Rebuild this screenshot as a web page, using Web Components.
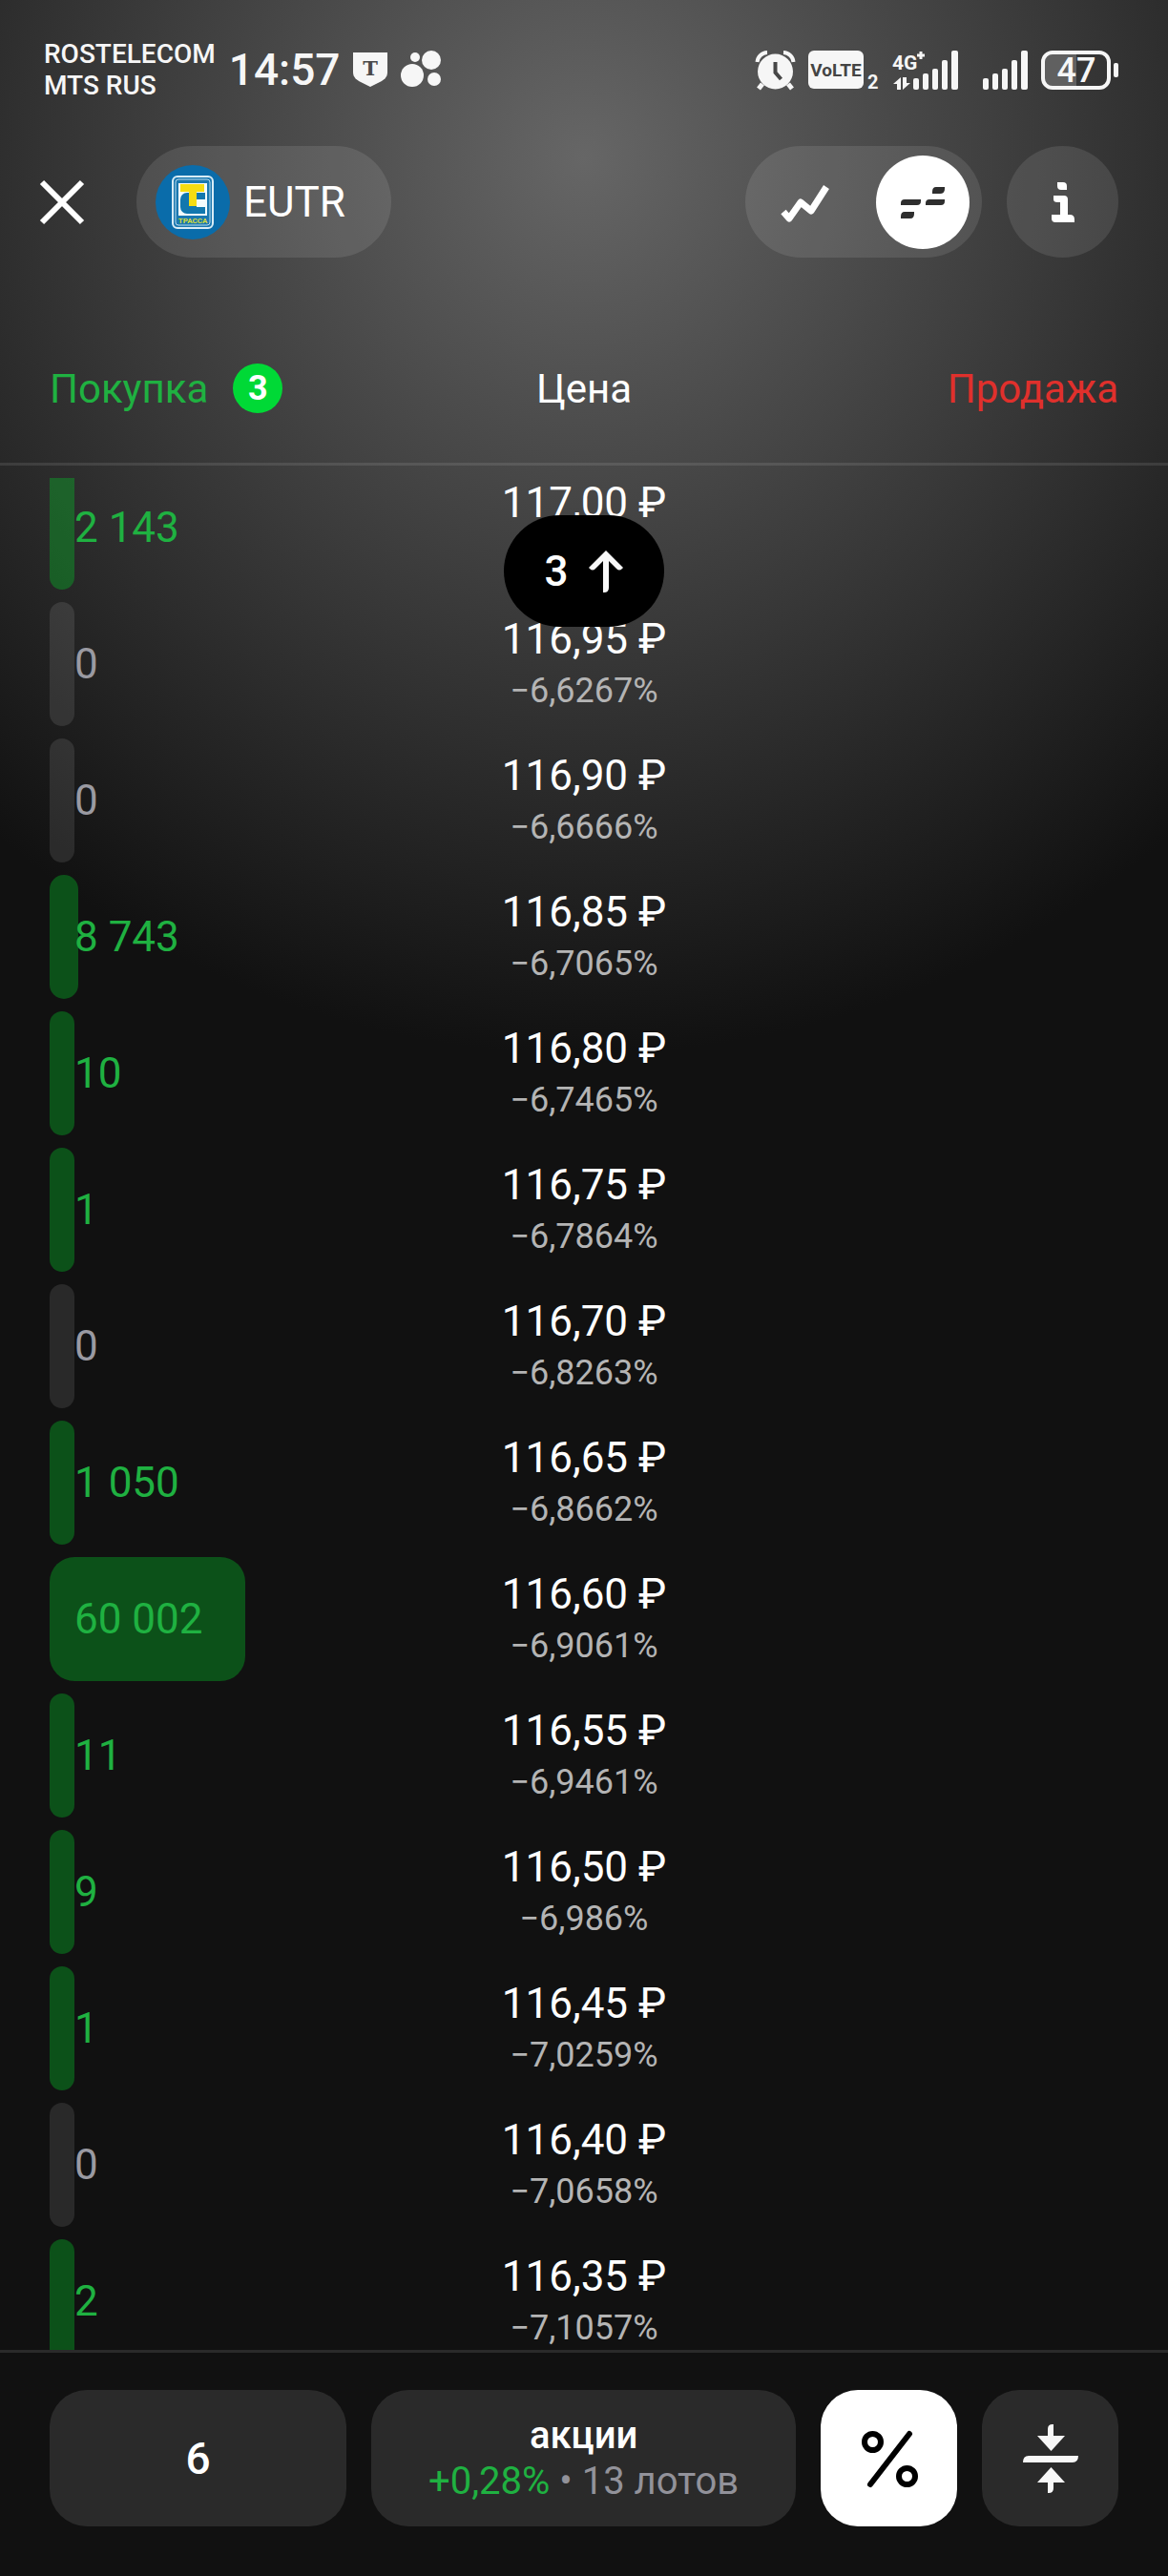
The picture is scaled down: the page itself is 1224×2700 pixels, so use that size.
<!DOCTYPE html>
<html lang="ru">
<head>
<meta charset="utf-8">
<meta name="viewport" content="width=device-width, initial-scale=1">
<title>EUTR</title>
<style>
    body {
        margin: 0;
        background: #111;
        color: #fff;
        font-family: Roboto, "Noto Sans", sans-serif;
    }
</style>
</head>
<body>
<app-screen>
    <status-bar slot="status"></status-bar>
    <top-bar slot="top" ticker="EUTR"></top-bar>
    <order-book bids="3"></order-book>
    <bottom-bar slot="bottom"></bottom-bar>
</app-screen>

<script>
class AppScreen extends HTMLElement {
    constructor() {
        super();
        this.attachShadow({ mode: 'open' });
        this.shadowRoot.innerHTML = `
            <style>
                :host {
                    display: flex;
                    flex-direction: column;
                    height: 100vh;
                    background: radial-gradient(circle 940px at 50% 165px, #666, #111);
                }

                main {
                    display: flex;
                    flex: 1;
                    min-height: 0;
                }

                ::slotted(order-book) {
                    flex: 1;
                }
            </style>
            <slot name="status"></slot>
            <slot name="top"></slot>
            <main><slot></slot></main>
            <slot name="bottom"></slot>
        `;
    }
}

class StatusBar extends HTMLElement {
    constructor() {
        super();
        this.attachShadow({ mode: 'open' });
        this.shadowRoot.innerHTML = `
            <style>
                :host {
                    display: flex;
                    align-items: center;
                    justify-content: space-between;
                    height: 66px;
                    padding: 40px 52px 47px 46px;
                    color: #f6f6f6;
                }

                .group {
                    display: flex;
                    align-items: center;
                    gap: 14px;
                }

                .signals {
                    display: flex;
                    gap: 26px;
                }

                .carrier {
                    font-size: 28px;
                    line-height: 33px;
                    font-weight: 500;
                }

                .time {
                    font-size: 46px;
                    line-height: 66px;
                    font-weight: 500;
                }

                svg {
                    display: block;
                    overflow: visible;
                    fill: currentColor;
                }
            </style>
            <div class="group">
                <div class="carrier">ROSTELECOM<br>MTS RUS</div>
                <div class="time">14:57</div>
                <svg width="36" height="36" viewBox="0 0 36 36">
                    <path d="M0 0h36v21c0 5-4 8-8 10l-10 5-10-5c-4-2-8-5-8-10z"/>
                    <text x="18" y="24" text-anchor="middle" font-family="DejaVu Serif, serif" font-size="21" font-weight="700" fill="#4a4a4a">T</text>
                </svg>
                <svg width="42" height="40" viewBox="0 0 42 40">
                    <circle cx="15" cy="7" r="5"/>
                    <circle cx="32" cy="10" r="10"/>
                    <circle cx="12" cy="26" r="12"/>
                    <circle cx="35" cy="30" r="7"/>
                </svg>
            </div>
            <div class="group">
                <svg width="41" height="42" viewBox="0 0 41 42">
                    <circle cx="20.500" cy="23" r="18.500"/>
                    <path d="M1.500 13A11 11 0 0 1 12 3M39.500 13A11 11 0 0 0 29 3" fill="none" stroke="currentColor" stroke-width="4"/>
                    <path d="M7 36l-4 5M34 36l4 5" stroke="currentColor" stroke-width="5"/>
                    <path d="M20.500 13v11l6 7" fill="none" stroke="#474747" stroke-width="4"/>
                </svg>
                <svg width="74" height="41" viewBox="0 0 74 41">
                    <rect width="58" height="40" rx="6"/>
                    <text x="29" y="27" text-anchor="middle" font-size="19" font-weight="700" fill="#444">VoLTE</text>
                    <text x="62" y="40" font-size="20" font-weight="700">2</text>
                </svg>
                <div class="signals">
                    <svg width="69" height="41" viewBox="0 0 69 41">
                        <text x="0" y="20" font-size="21" font-weight="700">4G</text>
                        <path d="M26 5h8M30 1v8" stroke="currentColor" stroke-width="3"/>
                        <path d="M9 28v13H5v-6H1zM11 28h4v6h4l-8 7z"/>
                        <rect x="22" y="29" width="6" height="12" rx="2"/>
                        <rect x="32" y="24" width="6" height="17" rx="2"/>
                        <rect x="42" y="19" width="6" height="22" rx="2"/>
                        <rect x="52" y="10" width="6" height="31" rx="2"/>
                        <rect x="62" y="0" width="7" height="41" rx="2"/>
                    </svg>
                    <svg width="47" height="41" viewBox="0 0 47 41">
                        <rect x="0" y="29" width="6" height="12" rx="2"/>
                        <rect x="10" y="24" width="6" height="17" rx="2"/>
                        <rect x="20" y="19" width="6" height="22" rx="2"/>
                        <rect x="30" y="10" width="6" height="31" rx="2"/>
                        <rect x="40" y="0" width="7" height="41" rx="2"/>
                    </svg>
                </div>
                <svg width="81" height="41" viewBox="0 0 81 41">
                    <path d="M12 4h25v33H12a8 8 0 0 1-8-8V12a8 8 0 0 1 8-8z" fill="#606060"/>
                    <rect x="2" y="2" width="69" height="37" rx="10" fill="none" stroke="currentColor" stroke-width="4"/>
                    <rect x="76" y="13" width="5" height="15" rx="2"/>
                    <text x="37" y="33" text-anchor="middle" font-size="36" font-weight="500">47</text>
                </svg>
            </div>
        `;
    }
}

class TopBar extends HTMLElement {
    constructor() {
        super();
        this.attachShadow({ mode: 'open' });
    }

    connectedCallback() {
        this.shadowRoot.innerHTML = `
            <style>
                :host {
                    display: flex;
                    align-items: center;
                    gap: 26px;
                    padding: 0 52px 0 39px;
                }

                button {
                    display: flex;
                    align-items: center;
                    justify-content: center;
                    padding: 0;
                    border: 0;
                    border-radius: 60px;
                    background: none;
                    color: inherit;
                    font: inherit;
                }

                svg {
                    display: block;
                }

                .close {
                    width: 52px;
                    height: 52px;
                    margin-right: 26px;
                }

                .ticker, .modes, .info {
                    height: 117px;
                    background: rgba(255, 255, 255, 0.1);
                }

                .ticker {
                    gap: 14px;
                    padding: 0 48px 0 20px;
                    font-size: 44px;
                }

                .modes {
                    display: flex;
                    align-items: center;
                    gap: 26px;
                    margin-left: auto;
                    padding: 0 13px;
                    border-radius: 60px;
                }

                .modes button {
                    width: 98px;
                    height: 98px;
                }

                .modes button[aria-pressed="true"] {
                    background: #fff;
                    color: #2e2e2e;
                }

                .info {
                    width: 117px;
                }
            </style>
            <button class="close" aria-label="Закрыть">
                <svg width="48" height="48" viewBox="0 0 48 48"><path d="M3 3l42 42M45 3L3 45" stroke="currentColor" stroke-width="6"/></svg>
            </button>
            <button class="ticker">
                <svg width="78" height="78" viewBox="0 0 78 78">
                    <circle cx="39" cy="39" r="39" fill="#0a6caa"/>
                    <rect x="18" y="12" width="42" height="54" rx="5" fill="#1b78b0" stroke="#d9ecf6" stroke-width="2"/>
                    <rect x="21" y="15" width="36" height="48" rx="3" fill="none" stroke="#b9dcee" stroke-width="1"/>
                    <rect x="24" y="19" width="30" height="34" fill="#f2fafc"/>
                    <path d="M33 29h19v7h-9v8h9v7H33a7 7 0 0 1-7-7v-8a7 7 0 0 1 7-7z" fill="#1277ae"/>
                    <path d="M26 20h25v8h-8v15h-8V28h-9z" fill="#f5dc12"/>
                    <text x="39" y="61" text-anchor="middle" font-size="8" font-weight="700" fill="#d4dc3c">ТРАССА</text>
                </svg>
                <span>${this.getAttribute('ticker')}</span>
            </button>
            <div class="modes">
                <button aria-label="График" aria-pressed="false">
                    <svg width="54" height="48" viewBox="0 0 54 48"><path d="M5 34l6 7 12-17 11 9L50 8" fill="none" stroke="currentColor" stroke-width="7" stroke-linejoin="round"/></svg>
                </button>
                <button aria-label="Стакан" aria-pressed="true">
                    <svg width="48" height="48" viewBox="0 0 48 48" fill="currentColor">
                        <path d="M38 8h9v2q0 5-5 5h-8v-2q0-5 4-5zM5 21h17v2q0 4-4 4H1v-2q0-4 4-4zM31 21h16v2q0 4-4 4H27v-2q0-4 4-4zM5 34h10v2q0 5-4 5H1v-2q0-5 4-5z"/>
                    </svg>
                </button>
            </div>
            <button class="info" aria-label="Информация">
                <svg width="26" height="44" viewBox="0 0 26 44" fill="currentColor">
                    <path d="M7 1h6q4 0 4 4v4h-6q-4 0-4-4zM7 15h7q4 0 4 4v16h2q5 0 5 5v3H5q-4 0-4-4v-4h9V22H7q-4 0-4-3v-4z"/>
                </svg>
            </button>
        `;
    }
}

// Quantity at which a depth bar fills its whole column
const FULL_DEPTH = 109700;

const LEVELS = [
    [2143, '117,00', '−6,5868%'],
    [0, '116,95', '−6,6267%'],
    [0, '116,90', '−6,6666%'],
    [8743, '116,85', '−6,7065%'],
    [10, '116,80', '−6,7465%'],
    [1, '116,75', '−6,7864%'],
    [0, '116,70', '−6,8263%'],
    [1050, '116,65', '−6,8662%'],
    [60002, '116,60', '−6,9061%'],
    [11, '116,55', '−6,9461%'],
    [9, '116,50', '−6,986%'],
    [1, '116,45', '−7,0259%'],
    [0, '116,40', '−7,0658%'],
    [2, '116,35', '−7,1057%']
];

class OrderBook extends HTMLElement {
    constructor() {
        super();
        this.attachShadow({ mode: 'open' });
    }

    connectedCallback() {
        this.render();
        // the list opens part-way into its first level
        this.shadowRoot.querySelector('tbody').scrollTop = 13;
    }

    formatQuantity(quantity) {
        return String(quantity).replace(/\B(?=(\d{3})+$)/g, ' ');
    }

    renderLevel([quantity, price, change]) {
        return `
            <tr>
                <td class="depth ${quantity ? '' : 'empty'}">
                    <div class="bar" style="width: ${Math.round(quantity / FULL_DEPTH * 100)}%"></div>
                    <span>${this.formatQuantity(quantity)}</span>
                </td>
                <td class="level">
                    <div class="price">${price} ₽</div>
                    <div class="change">${change}</div>
                </td>
                <td></td>
            </tr>
        `;
    }

    render() {
        const bids = this.getAttribute('bids');

        this.shadowRoot.innerHTML = `
            <style>
                :host {
                    display: flex;
                    position: relative;
                    padding-top: 59px;
                }

                table {
                    display: flex;
                    flex: 1;
                    flex-direction: column;
                    gap: 13px;
                }

                thead {
                    display: block;
                    border-bottom: 3px solid rgba(255, 255, 255, 0.1);
                }

                tbody {
                    display: block;
                    flex: 1;
                    min-height: 0;
                    overflow-y: auto;
                    scrollbar-width: none;
                }

                tr {
                    display: grid;
                    grid-template-columns: 1fr 1fr 1fr;
                    align-items: center;
                    padding: 0 52px;
                }

                thead tr {
                    height: 156px;
                    font-size: 42px;
                }

                tbody tr {
                    height: 130px;
                    margin-bottom: 13px;
                }

                th {
                    padding: 0;
                    font-weight: 400;
                }

                td {
                    padding: 0;
                }

                .buy {
                    display: flex;
                    align-items: center;
                    gap: 26px;
                    color: #1fb141;
                }

                .sell {
                    color: #e0302c;
                    text-align: right;
                }

                .badge {
                    width: 52px;
                    border-radius: 26px;
                    background: #00d936;
                    color: #fff;
                    font-size: 36px;
                    line-height: 52px;
                    font-weight: 700;
                    text-align: center;
                }

                .depth {
                    display: grid;
                    align-items: center;
                    height: 130px;
                    color: #1fb141;
                    font-size: 44px;
                }

                .depth > * {
                    grid-area: 1 / 1;
                }

                .depth span {
                    padding-left: 26px;
                }

                .bar {
                    min-width: 26px;
                    height: 130px;
                    border-radius: 26px;
                    background: rgba(3, 200, 40, 0.35);
                }

                .empty {
                    color: #9a9aa2;
                }

                .empty .bar {
                    background: rgba(255, 255, 255, 0.1);
                }

                .level {
                    text-align: center;
                }

                .price {
                    font-size: 44px;
                    line-height: 56px;
                }

                .change {
                    color: #b4b4b4;
                    font-size: 36px;
                    line-height: 52px;
                }

                .jump {
                    position: absolute;
                    top: 270px;
                    left: 50%;
                    transform: translateX(-50%);
                    display: flex;
                    align-items: center;
                    justify-content: center;
                    gap: 20px;
                    width: 168px;
                    height: 117px;
                    padding: 0;
                    border: 0;
                    border-radius: 60px;
                    background: #000;
                    color: #fff;
                    font: 500 44px Roboto, "Noto Sans", sans-serif;
                }
            </style>
            <table>
                <thead>
                    <tr>
                        <th class="buy" scope="col">Покупка <span class="badge">${bids}</span></th>
                        <th scope="col">Цена</th>
                        <th class="sell" scope="col">Продажа</th>
                    </tr>
                </thead>
                <tbody>${LEVELS.map(level => this.renderLevel(level)).join('')}</tbody>
            </table>
            <button class="jump">
                ${bids}
                <svg width="38" height="46" viewBox="0 0 38 46" fill="#f8f8f8">
                    <path d="M19 1l18 18-1 1q-3 3-6 0l-8-8v28q0 5-5 5h-1V12l-8 8q-3 3-6 0l-1-1z"/>
                </svg>
            </button>
        `;
    }
}

class BottomBar extends HTMLElement {
    constructor() {
        super();
        this.attachShadow({ mode: 'open' });
        this.shadowRoot.innerHTML = `
            <style>
                :host {
                    display: grid;
                    grid-template-columns: 7fr 10fr 143px 143px;
                    gap: 26px;
                    padding: 39px 52px 52px;
                    border-top: 3px solid #2a2a2a;
                }

                input, button {
                    box-sizing: border-box;
                    width: 100%;
                    height: 143px;
                    margin: 0;
                    padding: 0;
                    border: 0;
                    border-radius: 39px;
                    background: #2a2a2a;
                    color: #fff;
                    font: inherit;
                    text-align: center;
                }

                input {
                    font-size: 46px;
                    font-weight: 500;
                }

                button {
                    display: flex;
                    flex-direction: column;
                    align-items: center;
                    justify-content: center;
                }

                .unit {
                    font-size: 40px;
                    line-height: 48px;
                    font-weight: 500;
                }

                .details {
                    color: #92929a;
                    font-size: 40px;
                    line-height: 48px;
                }

                .up {
                    color: #1fb141;
                }

                .active {
                    background: #fff;
                    color: #000;
                }
            </style>
            <input type="text" inputmode="numeric" aria-label="Количество" value="6">
            <button>
                <span class="unit">акции</span>
                <span class="details"><span class="up">+0,28%</span> • 13 лотов</span>
            </button>
            <button class="active" aria-label="Проценты" aria-pressed="true">
                <svg width="72" height="72" viewBox="0 0 72 72" fill="none" stroke="currentColor" stroke-width="6">
                    <circle cx="18.500" cy="18.500" r="8.500"/>
                    <circle cx="54.500" cy="54.500" r="8.500"/>
                    <path d="M57 10L16 63" stroke-linecap="round"/>
                </svg>
            </button>
            <button aria-label="К центру стакана">
                <svg width="72" height="72" viewBox="0 0 72 72" fill="#f8f8f8">
                    <path d="M33 12V5q0-5 5-5h1v12h12L36.500 28 22 12zM13 33h52q0 7-6 7H7q0-7 6-7zM36.500 45L51 61H39v6q0 5-5 5h-1V61H22z"/>
                </svg>
            </button>
        `;
    }
}

customElements.define('app-screen', AppScreen);
customElements.define('status-bar', StatusBar);
customElements.define('top-bar', TopBar);
customElements.define('bottom-bar', BottomBar);
// last, because its scroll position depends on the height the bars leave
customElements.define('order-book', OrderBook);
</script>
</body>
</html>
